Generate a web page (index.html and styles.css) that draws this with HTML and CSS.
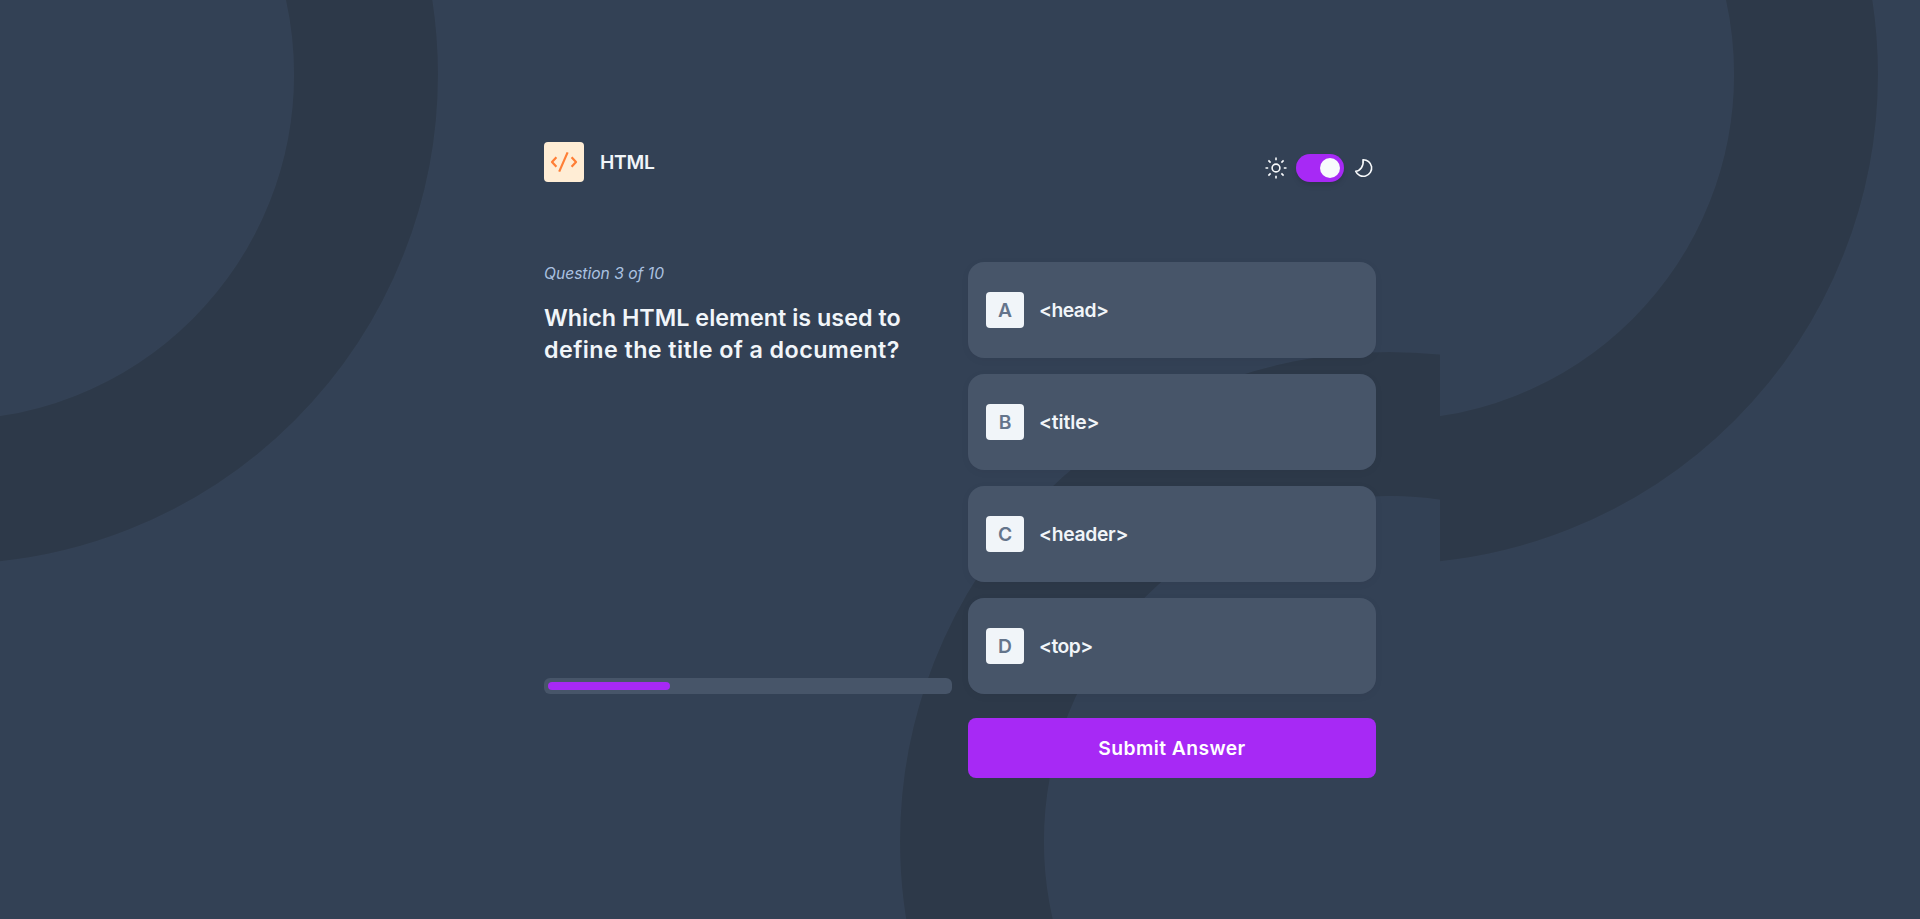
FILE: index.html
```html
<!DOCTYPE html>
<html lang="en">
<head>
<meta charset="utf-8">
<title>Frontend Quiz</title>
<link rel="stylesheet" href="styles.css">
</head>
<body>
<svg class="backdrop" width="1920" height="919" aria-hidden="true">
  <defs>
    <pattern id="rings" width="1440" height="960" patternUnits="userSpaceOnUse">
      <g fill="none" stroke="#2d3949" stroke-width="144">
        <circle cx="-51.5" cy="74.4" r="417.5"/>
        <circle cx="1389.5" cy="841.5" r="417.5"/>
      </g>
    </pattern>
  </defs>
  <rect width="1920" height="919" fill="url(#rings)"/>
</svg>
<main class="quiz">
  <header class="header">
    <div class="subject">
      <span class="subject-icon">
        <svg width="40" height="40" viewBox="0 0 40 40" fill="none" stroke="#ff7e35" stroke-width="2.2" stroke-linejoin="round">
          <path d="M12.4 15.2 8 20l4.4 4.8M27.6 15.2 32 20l-4.4 4.8M23.6 10.4l-8.4 19.2"/>
        </svg>
      </span>
      <h1 class="subject-name">HTML</h1>
    </div>
    <div class="theme">
      <svg width="24" height="24" viewBox="0 0 24 24" fill="none" stroke="#f8fafc" stroke-width="1.6">
        <circle cx="12" cy="12" r="3.9"/>
        <path d="M12 1.5v2.7M12 19.8v2.7M1.5 12h2.7M19.8 12h2.7M4.4 4.4l2.2 2.2M17.4 17.4l2.2 2.2M4.4 19.6l2.2-2.2M17.4 6.6l2.2-2.2"/>
      </svg>
      <button class="switch" aria-label="Dark theme"><span class="knob"></span></button>
      <svg width="24" height="24" viewBox="0 0 24 24" fill="none" stroke="#f8fafc" stroke-width="1.6" stroke-linejoin="round">
        <path d="M11 3.7A8.3 8.3 0 1 1 3.7 15.2C8.3 15 12 10 11 3.7Z"/>
      </svg>
    </div>
  </header>
  <div class="columns">
    <section class="prompt">
      <div>
        <p class="count">Question 3 of 10</p>
        <h2 class="question"><span class="line-a">Which HTML element is used to</span><br><span class="line-b">define the title of a document?</span></h2>
      </div>
      <div class="progress"><div class="progress-fill" style="width: 30.5%"></div></div>
    </section>
    <section class="answers">
      <ul class="options">
        <li class="option"><span class="letter">A</span><span class="label">&lt;head&gt;</span></li>
        <li class="option"><span class="letter">B</span><span class="label label-wide">&lt;title&gt;</span></li>
        <li class="option"><span class="letter">C</span><span class="label label-loose">&lt;header&gt;</span></li>
        <li class="option"><span class="letter">D</span><span class="label">&lt;top&gt;</span></li>
      </ul>
      <button class="submit">Submit Answer</button>
    </section>
  </div>
</main>
</body>
</html>
```

FILE: styles.css
```css
* { box-sizing: border-box; margin: 0; padding: 0; }

body {
  min-height: 919px;
  overflow: hidden;
  background: #334155;
  color: #f1f5f9;
  font-family: Inter, "Liberation Sans", sans-serif;
}

.backdrop { position: absolute; inset: 0; z-index: -1; }

.quiz { width: 832px; margin: 0 auto; padding-top: 142px; }

.header { display: flex; justify-content: space-between; height: 120px; }

.subject { display: flex; align-items: center; gap: 16px; height: 40px; }
.subject-icon { display: block; width: 40px; height: 40px; border-radius: 4px; background: #ffedd5; }
.subject-icon svg { display: block; }
.subject-name { font-size: 19.3px; font-weight: 600; line-height: 28px; letter-spacing: -0.3px; }

.theme { display: flex; align-items: center; gap: 8px; height: 28px; margin-top: 12px; }
.switch {
  display: flex; justify-content: flex-end; align-items: center;
  width: 48px; height: 28px; padding: 4px;
  border: 0; border-radius: 14px; background: #a729f5;
  box-shadow: 0 4px 6px -1px rgb(0 0 0 / 0.1), 0 2px 4px -2px rgb(0 0 0 / 0.1);
}
.knob { width: 20px; height: 20px; border-radius: 50%; background: #f8fafc; }

.columns { display: grid; grid-template-columns: 408px 408px; gap: 16px; }

.prompt { display: flex; flex-direction: column; justify-content: space-between; height: 432px; }
.count { font-size: 15.6px; font-style: italic; line-height: 24px; color: #abc1e1; }
.question { margin-top: 16px; font-size: 23.3px; font-weight: 600; line-height: 32px; white-space: nowrap; }
.line-a { letter-spacing: 0.02px; }
.line-b { letter-spacing: 0.42px; }

.progress { height: 16px; padding: 4px; border-radius: 6px; background: #475569; }
.progress-fill { height: 8px; border-radius: 4px; background: #a729f5; }

.options { display: grid; gap: 16px; list-style: none; }
.option {
  display: flex; align-items: center; gap: 15px;
  height: 96px; padding: 0 18px; border-radius: 16px; background: #475569;
  box-shadow: 0 2px 10px rgb(0 0 0 / 0.04);
}
.letter {
  display: grid; place-items: center; width: 38px; height: 36px;
  border-radius: 4px; background: #f1f5f9; color: #64748b;
  font-size: 19.3px; font-weight: 600; line-height: 28px;
}
.label { font-size: 19.3px; font-weight: 600; line-height: 28px; letter-spacing: -0.5px; }
.label-loose { letter-spacing: -0.3px; }
.label-wide { letter-spacing: -0.1px; }

.submit {
  display: block; width: 100%; height: 60px; margin-top: 24px;
  border: 0; border-radius: 8px; background: #a729f5; color: #fff;
  font: 600 19.3px/28px Inter, "Liberation Sans", sans-serif;
  letter-spacing: 0.43px;
}
```
